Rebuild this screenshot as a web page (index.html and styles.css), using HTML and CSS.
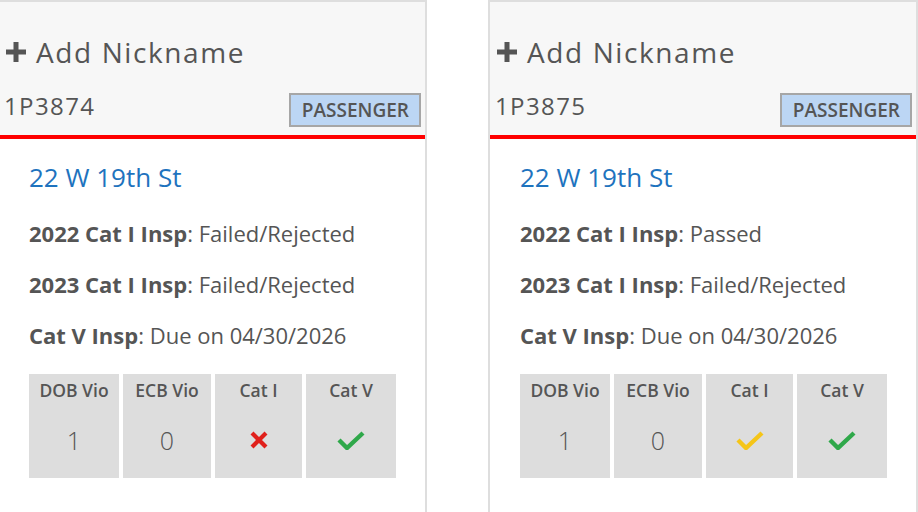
FILE: index.html
```html
<!DOCTYPE html>
<html>
<head>
<meta charset="utf-8">
<link rel="stylesheet" href="styles.css">
</head>
<body>
<div class="row">
  <div class="card">
    <div class="card-head">
      <div class="nick"><svg class="plus" viewBox="0 0 24 24" width="24" height="24"><path d="M12 2v20M2 12h20" stroke="#555" stroke-width="5" fill="none"/></svg><span>Add Nickname</span></div>
      <div class="id-row"><span class="dev-id">1P3874</span><span class="badge">PASSENGER</span></div>
    </div>
    <div class="card-body">
      <div class="addr">22 W 19th St</div>
      <p class="line"><b>2022 Cat I Insp</b>: Failed/Rejected</p>
      <p class="line"><b>2023 Cat I Insp</b>: Failed/Rejected</p>
      <p class="line"><b>Cat V Insp</b>: Due on 04/30/2026</p>
      <div class="tiles">
        <div class="tile"><div class="t-head">DOB Vio</div><div class="t-val">1</div></div>
        <div class="tile"><div class="t-head">ECB Vio</div><div class="t-val">0</div></div>
        <div class="tile"><div class="t-head">Cat I</div><div class="t-val"><svg class="ico" viewBox="0 0 20 20" width="20" height="20"><path d="M3 3L17 17M17 3L3 17" stroke="#e0201b" stroke-width="4.2" fill="none"/></svg></div></div>
        <div class="tile"><div class="t-head">Cat V</div><div class="t-val"><svg class="ico" viewBox="0 0 28 20" width="28" height="20"><path d="M2 10L10 18L26 3" stroke="#2fa84a" stroke-width="4.4" fill="none"/></svg></div></div>
      </div>
    </div>
  </div>
  <div class="card">
    <div class="card-head">
      <div class="nick"><svg class="plus" viewBox="0 0 24 24" width="24" height="24"><path d="M12 2v20M2 12h20" stroke="#555" stroke-width="5" fill="none"/></svg><span>Add Nickname</span></div>
      <div class="id-row"><span class="dev-id">1P3875</span><span class="badge">PASSENGER</span></div>
    </div>
    <div class="card-body">
      <div class="addr">22 W 19th St</div>
      <p class="line"><b>2022 Cat I Insp</b>: Passed</p>
      <p class="line"><b>2023 Cat I Insp</b>: Failed/Rejected</p>
      <p class="line"><b>Cat V Insp</b>: Due on 04/30/2026</p>
      <div class="tiles">
        <div class="tile"><div class="t-head">DOB Vio</div><div class="t-val">1</div></div>
        <div class="tile"><div class="t-head">ECB Vio</div><div class="t-val">0</div></div>
        <div class="tile"><div class="t-head">Cat I</div><div class="t-val"><svg class="ico" viewBox="0 0 28 20" width="28" height="20"><path d="M2 10L10 18L26 3" stroke="#f5c518" stroke-width="4.4" fill="none"/></svg></div></div>
        <div class="tile"><div class="t-head">Cat V</div><div class="t-val"><svg class="ico" viewBox="0 0 28 20" width="28" height="20"><path d="M2 10L10 18L26 3" stroke="#2fa84a" stroke-width="4.4" fill="none"/></svg></div></div>
      </div>
    </div>
  </div>
</div>
</body>
</html>
```
FILE: styles.css
```css
html, body {
  margin: 0;
  padding: 0;
  background: #fff;
  overflow: hidden;
}
body {
  font-family: "Open Sans", "Liberation Sans", sans-serif;
  color: #555;
}
.row {
  display: flex;
  gap: 61px;
  margin-left: -3px;
}
.card {
  flex: none;
  width: 430px;
  height: 540px;
  box-sizing: border-box;
  border: 2px solid #dedede;
  background: #fff;
}
.card-head {
  background: #f7f7f7;
  border-bottom: 4px solid #ff0000;
  height: 133px;
  padding: 0 4px 0 5px;
  box-sizing: content-box;
  display: flex;
  flex-direction: column;
}
.nick {
  display: flex;
  align-items: center;
  gap: 8px;
  margin-top: 30px;
  height: 40px;
  font-size: 28px;
  color: #555;
  letter-spacing: 1.6px;
}
.plus {
  flex: none;
}
.id-row {
  display: flex;
  justify-content: space-between;
  align-items: flex-start;
  margin-top: 18px;
}
.dev-id {
  font-size: 24px;
  line-height: 32px;
  letter-spacing: 1.4px;
}
.badge {
  margin-top: 3px;
  background: #bcd6f4;
  border: 2px solid #a6a6a6;
  height: 30px;
  line-height: 30px;
  padding: 0 10px 0 11px;
  font-size: 19px;
  font-weight: 600;
  color: #555;
}
.card-body {
  padding: 20px 0 0 30px;
}
.addr {
  font-size: 26px;
  line-height: 36px;
  color: #1e73be;
  margin-bottom: 20px;
}
.line {
  margin: 0 0 15px;
  font-size: 22px;
  line-height: 36px;
}
.line b {
  font-weight: 700;
}
.tiles {
  display: grid;
  grid-template-columns: 90px 88px 87px 90px;
  gap: 4px;
  margin-top: 21px;
}
.tile {
  background: #dddddd;
  height: 104px;
  text-align: center;
}
.t-head {
  font-size: 17.5px;
  font-weight: 600;
  line-height: 24px;
  padding-top: 4px;
}
.t-val {
  font-size: 25px;
  font-weight: 300;
  height: 40px;
  margin-top: 18px;
  display: flex;
  align-items: center;
  justify-content: center;
}
```
